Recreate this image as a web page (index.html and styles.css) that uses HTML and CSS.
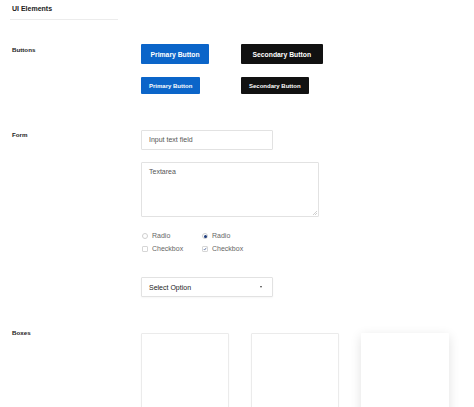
FILE: index.html
```html
<!DOCTYPE html>
<html>
<head>
<meta charset="utf-8">
<link rel="stylesheet" href="styles.css">
</head>
<body>
<div class="page">
  <div class="header"><h1 class="title">UI Elements</h1></div>

  <section class="section section-buttons">
    <div class="label label-buttons">Buttons</div>
    <div class="content btn-grid">
      <button class="btn btn-primary btn-lg">Primary Button</button>
      <button class="btn btn-secondary btn-lg">Secondary Button</button>
      <button class="btn btn-primary btn-sm">Primary Button</button>
      <button class="btn btn-secondary btn-sm">Secondary Button</button>
    </div>
  </section>

  <section class="section section-form">
    <div class="label label-form">Form</div>
    <div class="content form">
      <div class="field input">Input text field</div>
      <div class="field textarea">Textarea
        <svg class="grip" width="5" height="5" viewBox="0 0 5 5"><path d="M1 5L5 1M3 5L5 3" stroke="#bbb" stroke-width="0.7"/></svg>
      </div>
      <div class="choices">
        <div class="choice"><span class="radio"></span><span>Radio</span></div>
        <div class="choice"><span class="radio checked"></span><span>Radio</span></div>
        <div class="choice"><span class="check"></span><span>Checkbox</span></div>
        <div class="choice"><span class="check checked"><svg width="6" height="6" viewBox="0 0 6 6"><path d="M1.2 3.2L2.4 4.6L4.9 1.2" fill="none" stroke="#1b3a7a" stroke-width="0.9"/></svg></span><span>Checkbox</span></div>
      </div>
      <div class="field select"><span>Select Option</span><span class="caret"></span></div>
    </div>
  </section>

  <section class="section section-boxes">
    <div class="label label-boxes">Boxes</div>
    <div class="content boxes">
      <div class="box"></div>
      <div class="box"></div>
      <div class="box box-raised"></div>
    </div>
  </section>
</div>
</body>
</html>
```

FILE: styles.css
```css
html, body {
  margin: 0;
  padding: 0;
  background: #fff;
  overflow: hidden;
}
body {
  font-family: "Liberation Sans", Arial, sans-serif;
  color: #222;
}
.page {
  padding-left: 12px;
}
.header {
  width: 106px;
  margin-left: -2px;
  padding: 4px 0 5px 2px;
  border-bottom: 1px solid #ececec;
}
.title {
  margin: 0;
  font-size: 7px;
  line-height: 10px;
  font-weight: bold;
  color: #222;
}
.section {
  display: grid;
  grid-template-columns: 129px 1fr;
  align-items: start;
}
.section-buttons { margin-top: 24px; }
.section-form { margin-top: 36px; }
.section-boxes { margin-top: 36px; }
.label {
  font-size: 6.2px;
  line-height: 10px;
  font-weight: bold;
  color: #222;
}
.label-buttons { margin-top: 1px; }
.label-form { margin-top: 0; }
.label-boxes { margin-top: -5px; }

.btn-grid {
  display: grid;
  grid-template-columns: 100px auto;
  row-gap: 13px;
  justify-items: start;
}
.btn {
  border: none;
  border-radius: 1px;
  font-family: "Liberation Sans", Arial, sans-serif;
  font-weight: bold;
  color: #fff;
  margin: 0;
  cursor: pointer;
}
.btn-primary { background: #0b65c9; }
.btn-secondary { background: #111; }
.btn-lg {
  height: 20px;
  padding: 0 9.5px;
  font-size: 6.8px;
}
.btn-secondary.btn-lg {
  padding: 0 11.5px;
}
.btn-sm {
  height: 17px;
  padding: 0 8px;
  font-size: 6px;
}

.form {
  display: flex;
  flex-direction: column;
  align-items: flex-start;
}
.field {
  box-sizing: border-box;
  border: 1px solid #e2e2e2;
  border-radius: 1px;
  font-size: 7px;
  color: #555;
  background: #fff;
}
.input {
  width: 132px;
  height: 20px;
  line-height: 18px;
  padding-left: 7px;
}
.textarea {
  position: relative;
  margin-top: 12px;
  width: 178px;
  height: 55px;
  padding: 4px 7px;
  line-height: 9px;
}
.grip {
  position: absolute;
  right: 1px;
  bottom: 1px;
}
.choices {
  margin-top: 13px;
  display: grid;
  grid-template-columns: 60px auto;
  row-gap: 1px;
  font-size: 7px;
  color: #666;
  line-height: 12px;
}
.choice {
  display: flex;
  align-items: center;
  gap: 4px;
  padding-left: 1px;
}
.radio {
  box-sizing: border-box;
  width: 6px;
  height: 6px;
  border: 0.7px solid #cfcfcf;
  border-radius: 50%;
  display: flex;
  align-items: center;
  justify-content: center;
}
.radio.checked::after {
  content: "";
  width: 3px;
  height: 3px;
  border-radius: 50%;
  background: #1b3a7a;
}
.check {
  box-sizing: border-box;
  width: 6px;
  height: 6px;
  border: 0.7px solid #d6d6d6;
  border-radius: 1px;
  display: flex;
  align-items: center;
  justify-content: center;
}
.check svg { display: block; }
.select {
  margin-top: 22px;
  width: 132px;
  height: 20px;
  padding: 0 10px 0 7px;
  display: flex;
  align-items: center;
  justify-content: space-between;
  color: #222;
  box-shadow: 0 1px 2px rgba(0,0,0,0.04);
}
.caret {
  width: 0;
  height: 0;
  border-left: 1.5px solid transparent;
  border-right: 1.5px solid transparent;
  border-top: 2px solid #444;
}

.boxes {
  display: flex;
  gap: 22px;
}
.box {
  box-sizing: border-box;
  width: 88px;
  height: 100px;
  border: 1px solid #ebebeb;
  border-radius: 1px;
  box-shadow: 0 1px 2px rgba(0,0,0,0.04);
  background: #fff;
}
.box-raised {
  border: none;
  box-shadow: 0 3px 12px rgba(0,0,0,0.12);
}
```
